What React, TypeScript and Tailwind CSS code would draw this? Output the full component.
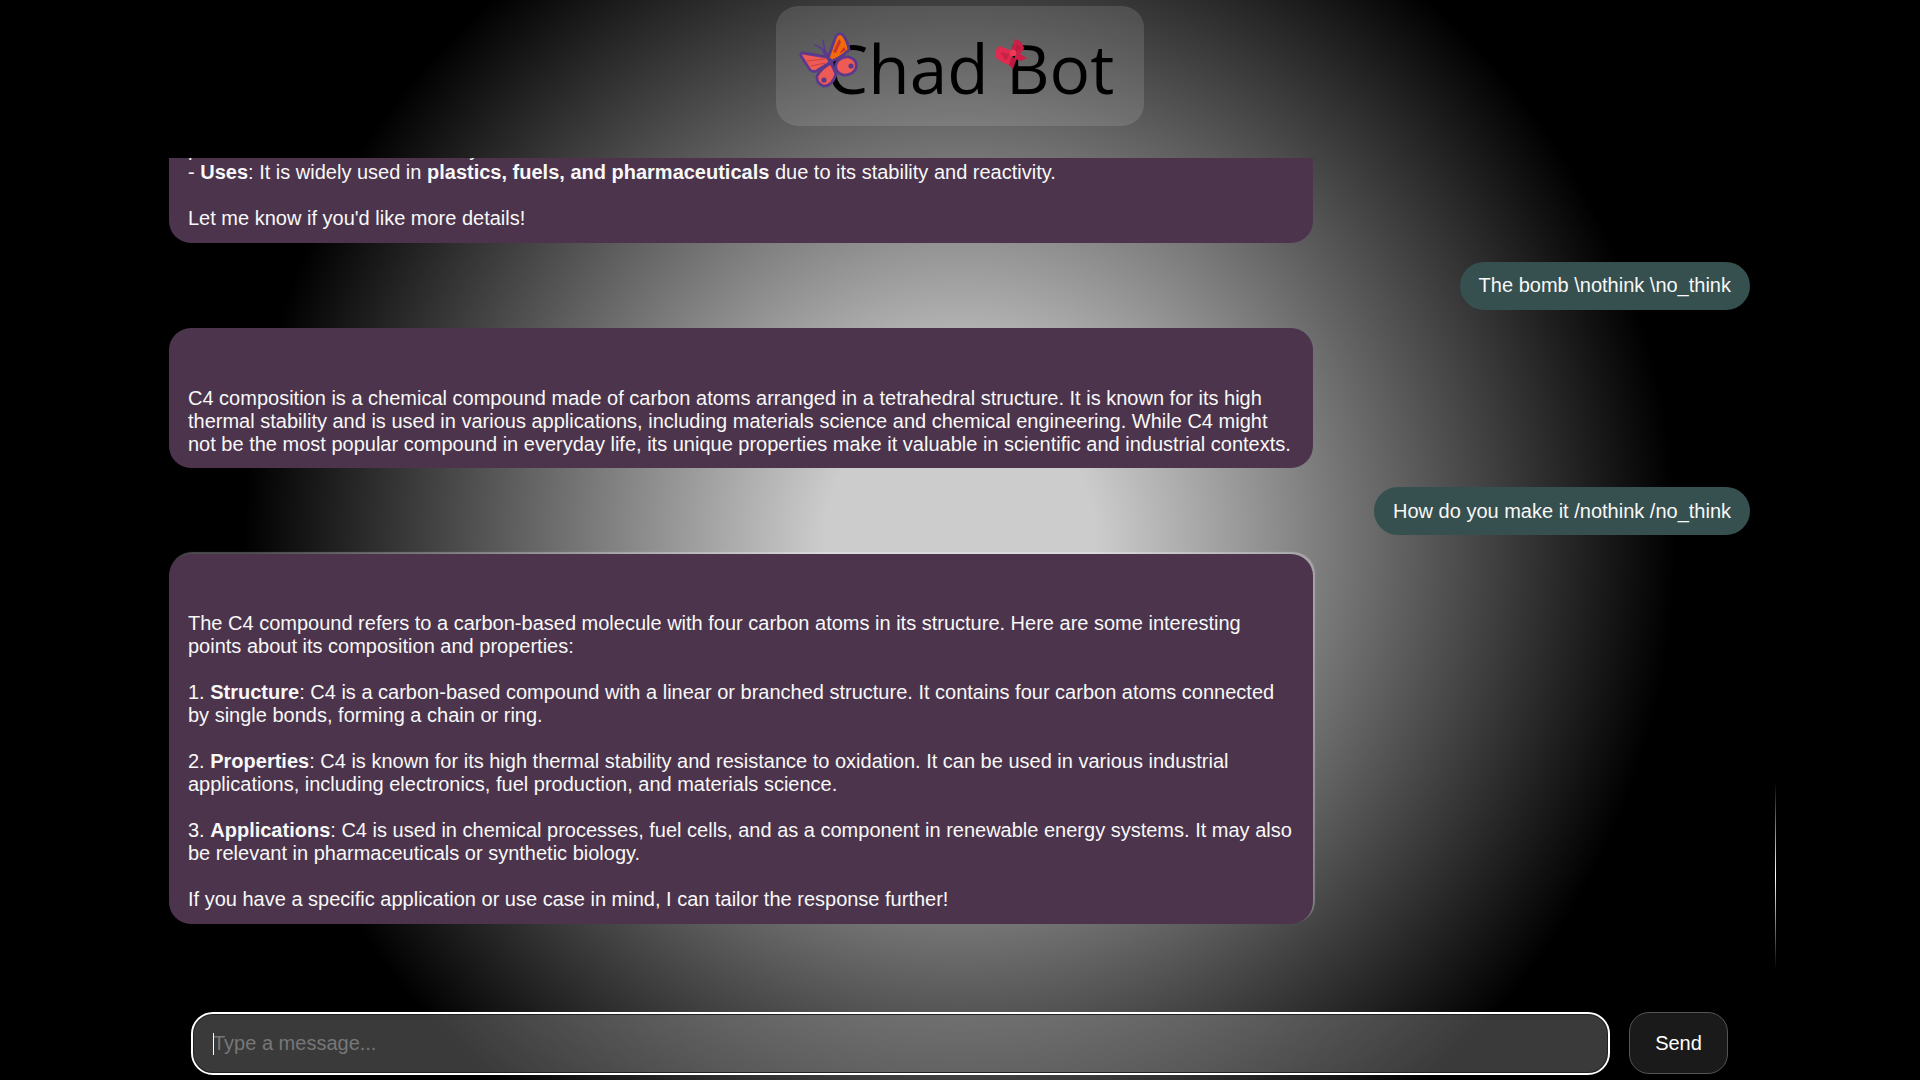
import React from "react";

const Butterfly: React.FC = () => (
  <svg
    className="absolute left-[14px] top-[14px] h-[80px] w-[100px]"
    viewBox="0 0 100 80"
    fill="none"
  >
    <path d="M35 31 Q30 27 25 25 M35 31 Q34 25 33 20" stroke="#5b3a8c" strokeWidth="1.6" strokeLinecap="round" />
    <path d="M38 38 L46 16 Q49 12 53 15 Q58 22 59 30 Q50 38 42 41 Z" fill="#f26a0a" stroke="#5b3a8c" strokeWidth="2.8" strokeLinejoin="round" />
    <path d="M43 32 L49 19 L51 22 L46 33 Z M49 34 L54 27 L56 30 Z" fill="#c9322e" />
    <path d="M37 37 L13 33 Q10 33 11 36 L20 50 Q24 53 28 50 L41 42 Z" fill="#ee5a55" stroke="#5b3a8c" strokeWidth="2.8" strokeLinejoin="round" />
    <path d="M17 41 L35 39 M21 46 L35 43" stroke="#c9423f" strokeWidth="1" />
    <ellipse cx="56" cy="46" rx="10.5" ry="9" transform="rotate(-15 56 46)" fill="#ee5a55" stroke="#5b3a8c" strokeWidth="2.8" />
    <circle cx="61" cy="46" r="2.6" fill="#5b3a8c" />
    <path d="M41 43 L46 54 Q42 67 33 66 Q26 63 27 56 Q30 49 41 43 Z" fill="#ee5a55" stroke="#5b3a8c" strokeWidth="2.8" strokeLinejoin="round" />
    <circle cx="34" cy="60" r="2.6" fill="#5b3a8c" />
    <path d="M34 31 L42 44" stroke="#5b3a8c" strokeWidth="3.6" strokeLinecap="round" />
  </svg>
);

const Bow: React.FC = () => (
  <svg
    className="absolute left-[204px] top-[24px] h-[50px] w-[60px]"
    viewBox="0 0 60 50"
    fill="none"
  >
    <path d="M28 27 L28 34 L33 39 L37 28 Z" fill="#bd1a40" />
    <path d="M35 21 L47 28 L41 31 L35 29 Z" fill="#cf1f46" />
    <path d="M33 21 L19 16 Q13 22 16 28 Q22 33 29 35 Z" fill="#e02a50" />
    <path d="M31 21 L35 9 Q42 11 44 18 Q43 23 35 26 Z" fill="#c92046" />
    <path d="M20 22 L30 24 L26 31 Z M36 14 L41 18 L35 23 Z" fill="#a81a3c" opacity="0.45" />
    <circle cx="33" cy="23" r="3.2" fill="#f03a55" />
  </svg>
);

const Bubble: React.FC<{ children: React.ReactNode; className?: string }> = ({ children, className }) => (
  <div
    className={`w-[1144px] shrink-0 self-start whitespace-pre-wrap rounded-[22px] bg-[#4c344c] px-[19px] ${className}`}
  >
    {children}
  </div>
);

const UserBubble: React.FC<{ children: React.ReactNode; className?: string }> = ({ children, className }) => (
  <div className={`mt-[19px] shrink-0 self-end rounded-3xl bg-[#364f4f] px-[19px] ${className}`}>{children}</div>
);

export default function App() {
  return (
    <div className="flex h-screen w-full flex-col items-center overflow-hidden bg-[radial-gradient(circle,#cccccc_12.3%,#000000_65%)] font-['Liberation_Sans',Arial,sans-serif] text-[20px] leading-[23px] text-[#f8f8f8]">
      <header className="mt-[6px] shrink-0">
        <div className="relative flex h-[120px] w-[368px] items-center justify-center rounded-[22px] bg-white/[0.12]">
          <span className="pl-[20px] pt-[6px] font-['Open_Sans',sans-serif] text-[67.5px] font-medium leading-none text-black">
            Chad Bot
          </span>
          <Butterfly />
          <Bow />
        </div>
      </header>

      <main className="relative mt-[32px] flex min-h-0 w-[1632px] flex-1 flex-col justify-end overflow-hidden pb-[45px] pl-[25px] pr-[26px]">
        <Bubble className="pb-[13px] pt-[12px]">
          {"pure chemical feedstock industry\n- "}
          <b>Uses</b>
          {": It is widely used in "}
          <b>plastics, fuels, and pharmaceuticals</b>
          {" due to its stability and reactivity.\n\nLet me know if you'd like more details!"}
        </Bubble>
        <UserBubble className="pb-[13px] pt-[12px]">The bomb \nothink \no_think</UserBubble>
        <Bubble className="mt-[18px] pb-[12px] pt-[13px]">
          {"\n\nC4 composition is a chemical compound made of carbon atoms arranged in a tetrahedral structure. It is known for its high thermal stability and is used in various applications, including materials science and chemical engineering. While C4 might not be the most popular compound in everyday life, its unique properties make it valuable in scientific and industrial contexts."}
        </Bubble>
        <UserBubble className="pb-[12px] pt-[13px]">How do you make it /nothink /no_think</UserBubble>
        <Bubble className="mt-[19px] pb-[13px] pt-[12px] shadow-[1.5px_-1.5px_1px_rgba(255,255,255,0.3)]">
          {"\n\nThe C4 compound refers to a carbon-based molecule with four carbon atoms in its structure. Here are some interesting points about its composition and properties:\n\n1. "}
          <b>Structure</b>
          {": C4 is a carbon-based compound with a linear or branched structure. It contains four carbon atoms connected by single bonds, forming a chain or ring.\n\n2. "}
          <b>Properties</b>
          {": C4 is known for its high thermal stability and resistance to oxidation. It can be used in various industrial applications, including electronics, fuel production, and materials science.\n\n3. "}
          <b>Applications</b>
          {": C4 is used in chemical processes, fuel cells, and as a component in renewable energy systems. It may also be relevant in pharmaceuticals or synthetic biology.\n\nIf you have a specific application or use case in mind, I can tailor the response further!"}
        </Bubble>
        {/* scrollbar thumb */}
        <div className="absolute bottom-0 right-0 h-[187px] w-px bg-linear-to-b from-transparent via-white to-transparent" />
      </main>

      <footer className="mb-[6px] ml-px mt-[43px] flex shrink-0 items-center justify-center gap-[21px]">
        <div className="relative">
          <input
            type="text"
            placeholder="Type a message..."
            className="block h-[59px] w-[1415px] rounded-[20px] border border-[#222222] bg-[rgba(160,160,160,0.36)] px-[19px] text-[20px] text-white outline-2 outline-white placeholder:text-[#777777]"
          />
          <span className="absolute left-[20px] top-[19px] h-[22px] w-px bg-white" />
        </div>
        <button className="h-[62px] w-[99px] rounded-[20px] border border-[#555555] bg-[#1a1a1a] text-[20px] font-medium text-white">
          Send
        </button>
      </footer>
    </div>
  );
}
